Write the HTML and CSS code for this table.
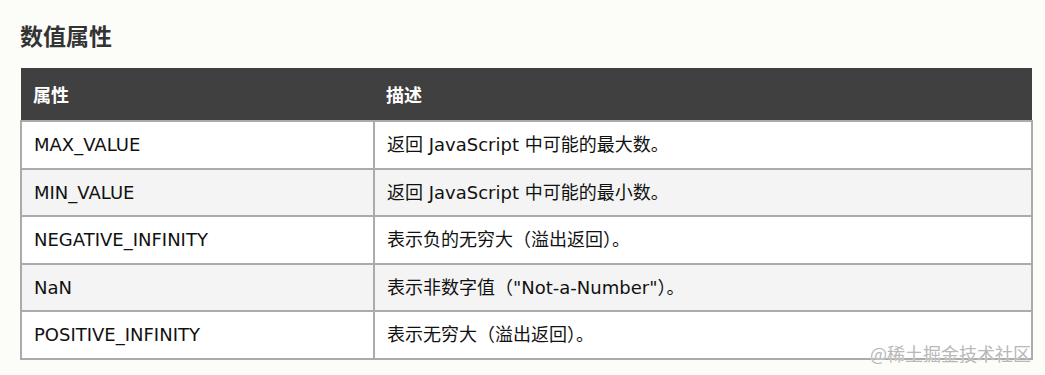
FILE: index.html
```html
<!DOCTYPE html>
<html lang="zh-CN">
<head>
<meta charset="utf-8">
<title>数值属性</title>
<link rel="stylesheet" href="styles.css">
</head>
<body>
<main class="page">
  <h2 class="title">数值属性</h2>
  <table class="props">
    <thead>
      <tr><th class="col-name">属性</th><th>描述</th></tr>
    </thead>
    <tbody>
      <tr><td>MAX_VALUE</td><td>返回 JavaScript 中可能的最大数。</td></tr>
      <tr><td>MIN_VALUE</td><td>返回 JavaScript 中可能的最小数。</td></tr>
      <tr><td>NEGATIVE_INFINITY</td><td>表示负的无穷大（溢出返回）。</td></tr>
      <tr><td>NaN</td><td>表示非数字值（"Not-a-Number"）。</td></tr>
      <tr><td>POSITIVE_INFINITY</td><td>表示无穷大（溢出返回）。</td></tr>
    </tbody>
  </table>
  <div class="watermark">@稀土掘金技术社区</div>
</main>
</body>
</html>
```

FILE: styles.css
```css
html, body {
  margin: 0;
  padding: 0;
  background: #fcfcf8;
}
.page {
  position: relative;
  height: 375px;
  padding: 0 12px 0 20px;
  box-sizing: border-box;
  font-family: "DejaVu Sans", "Noto Sans CJK SC", sans-serif;
  color: #111;
}
.title {
  margin: 0;
  padding-top: 19px;
  height: 68px;
  box-sizing: border-box;
  font-size: 23px;
  line-height: 32px;
  font-weight: bold;
  color: #333;
  font-family: "Noto Sans CJK SC", sans-serif;
}
.props {
  width: 100%;
  border-collapse: collapse;
  font-size: 18px;
}
.props th {
  background: #404040;
  color: #fff;
  text-align: left;
  font-weight: bold;
  font-size: 18px;
  line-height: 20px;
  padding: 16px 12px;
  font-family: "Noto Sans CJK SC", sans-serif;
}
.props .col-name {
  width: 329px;
}
.props td {
  border: 2px solid #ababab;
  line-height: 20px;
  padding: 13px 11px 12.6px 12px;
  background: #fff;
}
.props tbody tr:nth-child(even) td {
  background: #f4f4f4;
}
.watermark {
  position: absolute;
  right: 14px;
  bottom: 11px;
  font-family: "Noto Sans CJK SC", sans-serif;
  font-size: 18px;
  line-height: 22px;
  color: #b8b8b8;
  text-shadow: 0 0 1px #fff;
}
```
